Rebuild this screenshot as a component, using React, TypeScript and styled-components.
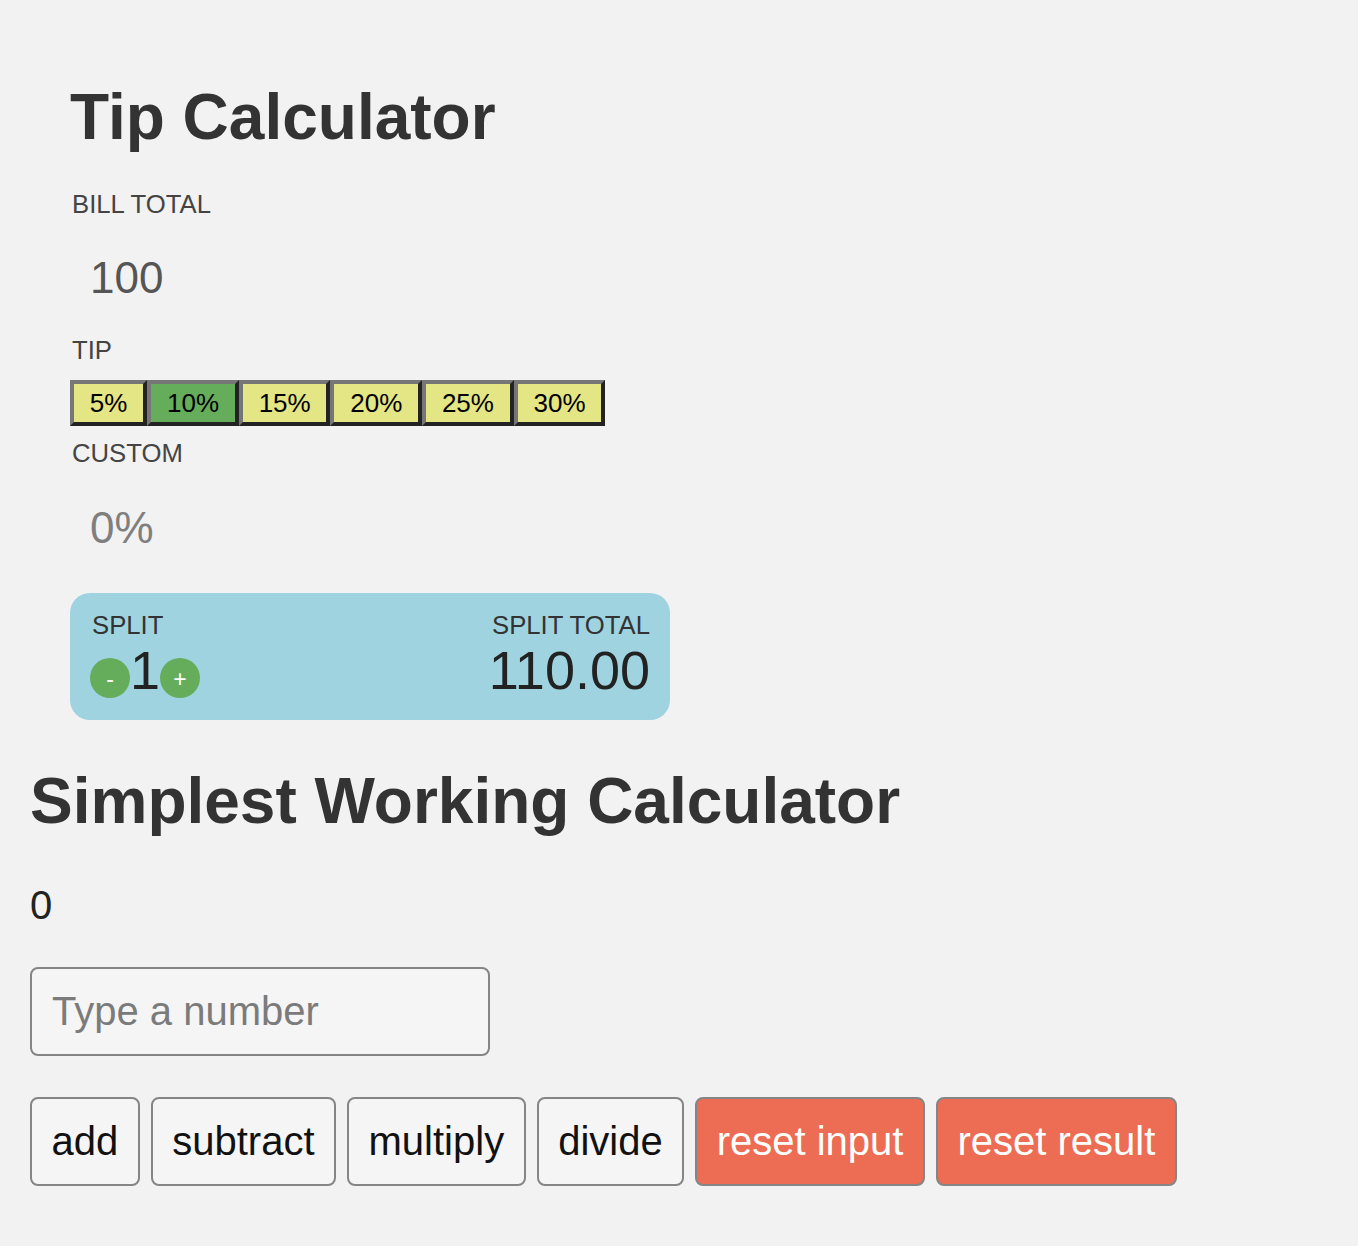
import React, { useState } from "react";
import styled, { createGlobalStyle } from "styled-components";

const GlobalStyle = createGlobalStyle`
  html, body {
    margin: 0;
    padding: 0;
    background: #f2f2f2;
  }
  body {
    font-family: "Liberation Sans", Arial, Helvetica, sans-serif;
    color: #333;
  }
  * { box-sizing: border-box; }
`;

const Page = styled.div`
  min-height: 1246px;
  display: flex;
  flex-direction: column;
  padding: 0 0 40px 30px;
`;

const TipSection = styled.section`
  display: flex;
  flex-direction: column;
  align-items: flex-start;
  padding: 80px 0 0 40px;
`;

const Heading = styled.h1<{ $top?: number }>`
  margin: ${(p) => p.$top ?? 0}px 0 0 0;
  font-size: 64px;
  line-height: 74px;
  font-weight: 700;
  color: #333;
  white-space: nowrap;
`;

const FieldLabel = styled.label<{ $top: number }>`
  display: block;
  margin-top: ${(p) => p.$top}px;
  padding-left: 2px;
  font-size: 25.7px;
  line-height: 30px;
  color: #444;
  text-transform: uppercase;
`;

const AmountInput = styled.input<{ $top: number }>`
  margin-top: ${(p) => p.$top}px;
  width: 320px;
  height: 50px;
  padding: 0 20px;
  border: none;
  outline: none;
  background: transparent;
  font-family: inherit;
  font-size: 44px;
  color: #555;
  &::placeholder {
    color: #7f7f7f;
  }
`;

const TipRow = styled.div`
  display: flex;
  margin-top: 14.6px;
`;

const TipButton = styled.button<{ $active: boolean }>`
  height: 46px;
  padding: 0 15.8px;
  border-width: 4px;
  border-style: solid;
  border-color: #767676 #232323 #232323 #767676;
  background: ${(p) => (p.$active ? "#66ad5b" : "#e4e584")};
  font-family: inherit;
  font-size: 26px;
  line-height: 38px;
  color: #000;
  cursor: pointer;
`;

const SplitCard = styled.div`
  margin-top: 40.2px;
  width: 600px;
  height: 127px;
  padding: 17.4px 20px 0 20px;
  border-radius: 20px;
  background: #9fd3df;
  display: flex;
  justify-content: space-between;
`;

const SplitColumn = styled.div<{ $right?: boolean }>`
  display: flex;
  flex-direction: column;
  align-items: ${(p) => (p.$right ? "flex-end" : "flex-start")};
`;

const SplitLabel = styled.div`
  padding-left: 2px;
  font-size: 25.7px;
  line-height: 30px;
  color: #333;
`;

const Stepper = styled.div`
  display: flex;
  align-items: flex-end;
  height: 60px;
`;

const StepButton = styled.button`
  width: 40px;
  height: 40px;
  margin-bottom: 2px;
  padding: 2px 0 0 0;
  border: none;
  border-radius: 50%;
  background: #66ad5b;
  color: #fff;
  font-family: inherit;
  font-size: 23px;
  line-height: 1;
  display: flex;
  align-items: center;
  justify-content: center;
  cursor: pointer;
`;

const BigNumber = styled.span`
  font-size: 54px;
  line-height: 60px;
  color: #222;
`;

const CalcSection = styled.section`
  display: flex;
  flex-direction: column;
  align-items: flex-start;
`;

const ResultValue = styled.div`
  margin-top: 45px;
  font-size: 40px;
  line-height: 44px;
  color: #222;
`;

const NumberInput = styled.input`
  margin-top: 40.2px;
  width: 460px;
  height: 89px;
  padding: 19px 20px;
  border: 2px solid #858585;
  border-radius: 8px;
  background: #f5f5f5;
  font-family: inherit;
  font-size: 40px;
  color: #222;
  outline: none;
  &::placeholder {
    color: #7b7b7b;
  }
`;

const ButtonRow = styled.div`
  display: flex;
  gap: 11px;
  margin-top: 41px;
`;

const CalcButton = styled.button<{ $danger?: boolean }>`
  height: 89px;
  padding: 19px 19.5px;
  border: 2px solid #858585;
  border-radius: 8px;
  background: ${(p) => (p.$danger ? "#ec6d53" : "#f5f5f5")};
  color: ${(p) => (p.$danger ? "#fff" : "#111")};
  font-family: inherit;
  font-size: 40px;
  line-height: 47px;
  cursor: pointer;
  white-space: nowrap;
`;

const TIPS = [5, 10, 15, 20, 25, 30];

export default function App() {
  const [bill, setBill] = useState("100");
  const [tip, setTip] = useState(10);
  const [custom, setCustom] = useState("");
  const [split, setSplit] = useState(1);
  const [result, setResult] = useState(0);
  const [entry, setEntry] = useState("");

  const billNum = parseFloat(bill) || 0;
  const tipPct = custom !== "" ? parseFloat(custom) || 0 : tip;
  const splitTotal = ((billNum * (1 + tipPct / 100)) / split).toFixed(2);
  const n = parseFloat(entry) || 0;

  return (
    <>
      <GlobalStyle />
      <Page>
        <TipSection>
          <Heading>Tip Calculator</Heading>
          <FieldLabel $top={35.4}>Bill Total</FieldLabel>
          <AmountInput $top={33.4} value={bill} onChange={(e) => setBill(e.target.value)} />
          <FieldLabel $top={32.6}>Tip</FieldLabel>
          <TipRow>
            {TIPS.map((t) => (
              <TipButton
                key={t}
                $active={custom === "" && tip === t}
                onClick={() => {
                  setTip(t);
                  setCustom("");
                }}
              >
                {t}%
              </TipButton>
            ))}
          </TipRow>
          <FieldLabel $top={12.4}>Custom</FieldLabel>
          <AmountInput
            $top={34.4}
            placeholder="0%"
            value={custom}
            onChange={(e) => setCustom(e.target.value)}
          />
          <SplitCard>
            <SplitColumn>
              <SplitLabel>SPLIT</SplitLabel>
              <Stepper>
                <StepButton onClick={() => setSplit((s) => Math.max(1, s - 1))}>-</StepButton>
                <BigNumber>{split}</BigNumber>
                <StepButton onClick={() => setSplit((s) => s + 1)}>+</StepButton>
              </Stepper>
            </SplitColumn>
            <SplitColumn $right>
              <SplitLabel>SPLIT TOTAL</SplitLabel>
              <BigNumber>{splitTotal}</BigNumber>
            </SplitColumn>
          </SplitCard>
        </TipSection>
        <CalcSection>
          <Heading $top={43.8}>Simplest Working Calculator</Heading>
          <ResultValue>{result}</ResultValue>
          <NumberInput
            placeholder="Type a number"
            value={entry}
            onChange={(e) => setEntry(e.target.value)}
          />
          <ButtonRow>
            <CalcButton onClick={() => setResult((r) => r + n)}>add</CalcButton>
            <CalcButton onClick={() => setResult((r) => r - n)}>subtract</CalcButton>
            <CalcButton onClick={() => setResult((r) => r * n)}>multiply</CalcButton>
            <CalcButton onClick={() => setResult((r) => (n === 0 ? r : r / n))}>divide</CalcButton>
            <CalcButton $danger onClick={() => setEntry("")}>reset input</CalcButton>
            <CalcButton $danger onClick={() => setResult(0)}>reset result</CalcButton>
          </ButtonRow>
        </CalcSection>
      </Page>
    </>
  );
}
